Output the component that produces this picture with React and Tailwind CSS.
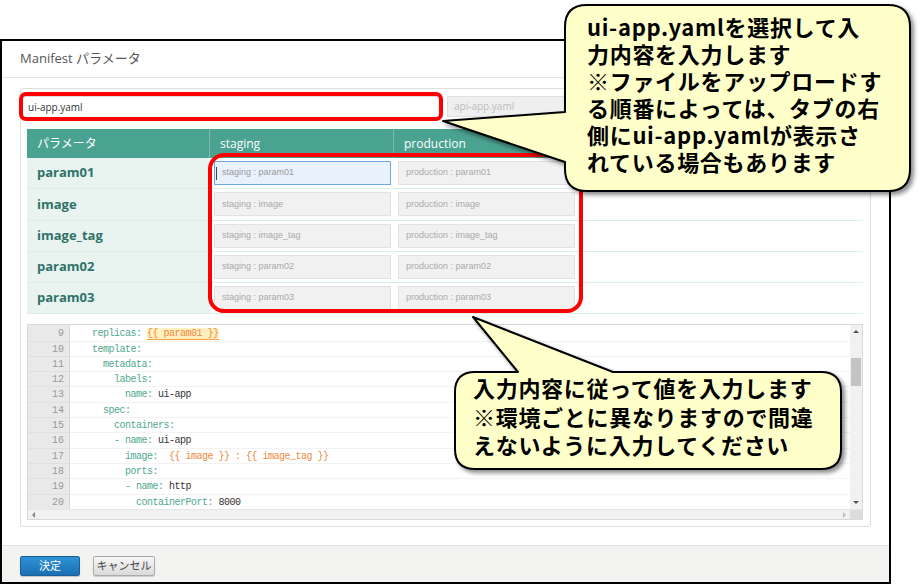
const rows = ['param01', 'image', 'image_tag', 'param02', 'param03'];

const code = [
  [9, [['    '], ['replicas:', 'k'], [' '], ['{{ param01 }}', 'hl']]],
  [10, [['    template:', 'k']]],
  [11, [['      metadata:', 'k']]],
  [12, [['        labels:', 'k']]],
  [13, [['          name:', 'k'], [' ui-app', 'v']]],
  [14, [['      spec:', 'k']]],
  [15, [['        containers:', 'k']]],
  [16, [['        - name:', 'k'], [' ui-app', 'v']]],
  [17, [['          image:', 'k'], ['  '], ['{{ image }}', 't'], [' : ', 't'], ['{{ image_tag }}', 't']]],
  [18, [['          ports:', 'k']]],
  [19, [['          - name:', 'k'], [' http', 'v']]],
  [20, [['            containerPort:', 'k'], [' 8000', 'v']]],
];

function Token({ text, kind }) {
  if (kind === 'k') return <span className="text-[#4fa88f]">{text}</span>;
  if (kind === 'v') return <span className="text-[#333]">{text}</span>;
  if (kind === 't') return <span className="text-[#f08a3c]">{text}</span>;
  if (kind === 'hl')
    return (
      <span className="text-[#f08a3c] bg-[#fff0c0] border-b border-[#f5a04a]">{text}</span>
    );
  return <span>{text}</span>;
}

function ParamInput({ text, focused }) {
  return (
    <div
      className={
        focused
          ? 'relative w-[177px] h-[24px] border border-[#6ea6e0] bg-[#e8f2fd] flex items-center pl-[7px] text-[9px] text-[#999] font-["Liberation_Sans",sans-serif]'
          : 'w-[177px] h-[24px] border border-[#e2e2e2] bg-[#f1f1f1] flex items-center pl-[7px] text-[9px] text-[#aaa] font-["Liberation_Sans",sans-serif]'
      }
    >
      {focused && <span className="absolute left-[1px] top-[5px] w-px h-[13px] bg-[#444]" />}
      {text}
    </div>
  );
}

function CodeEditor() {
  return (
    <div className="h-[196px] border border-[#d8d8d8] flex flex-col">
      <div className="flex h-[184px] overflow-hidden">
        <div className="w-[42px] bg-[#e9e9e9] border-r border-[#d6d6d6] pt-[1px]">
          {code.map(([n]) => (
            <div
              key={n}
              className="h-[15.3px] leading-[15.3px] text-right pr-[5px] text-[10px] text-[#999] border-b border-[#e0e0e0] font-['Liberation_Mono',monospace]"
            >
              {n}
            </div>
          ))}
        </div>
        <div className="flex-1 pt-[1px] font-['Liberation_Mono',monospace] text-[10px] tracking-[-0.5px]">
          {code.map(([n, parts]) => (
            <div
              key={n}
              className="h-[15.3px] leading-[15.3px] whitespace-pre border-b border-[#f2f2f2]"
            >
              {parts.map(([t, k], i) => (
                <Token key={i} text={t} kind={k} />
              ))}
            </div>
          ))}
        </div>
        <div className="w-[12px] bg-[#f1f1f1] flex flex-col items-center">
          <div className="mt-[5px] w-0 h-0 border-x-[3px] border-x-transparent border-b-[3px] border-b-[#555]" />
          <div className="mt-[25px] w-[10px] h-[28px] bg-[#c4c4c4]" />
          <div className="mt-auto mb-[5px] w-0 h-0 border-x-[3px] border-x-transparent border-t-[3px] border-t-[#555]" />
        </div>
      </div>
      <div className="flex h-[10px] bg-[#f1f1f1] border-t border-[#e6e6e6]">
        <div className="flex-1 flex items-center px-[4px]">
          <div className="w-0 h-0 border-y-[3px] border-y-transparent border-r-[3px] border-r-[#888]" />
          <div className="ml-auto w-0 h-0 border-y-[3px] border-y-transparent border-l-[3px] border-l-[#bbb]" />
        </div>
        <div className="w-[12px] bg-[#dcdcdc]" />
      </div>
    </div>
  );
}

export default function App() {
  return (
    <div className="relative w-[922px] h-[586px] overflow-hidden bg-white font-['Open_Sans','Noto_Sans_CJK_JP',sans-serif]">
      {/* modal */}
      <div className="mt-[39px] w-[891px] h-[545px] border-2 border-black flex flex-col">
        <div className="h-[37px] flex items-center px-[18px] border-b border-[#e5e5e5] text-[13px] text-[#555]">
          Manifest パラメータ
        </div>

        <div className="px-[18px] pt-[10px] pb-[18px]">
          <div className="h-[439px] border border-[#dedede] rounded-[3px]">
            <div className="flex pt-[7px] pl-[1px] text-[10px]">
              <div className="w-[418px] h-[22px] bg-white border border-[#ddd] flex items-center pl-[5px] text-[#333]">
                ui-app.yaml
              </div>
              <div className="ml-[7px] w-[180px] h-[21px] bg-[#efefef] border border-[#e0e0e0] flex items-center pl-[6px] text-[#bbb]">
                api-app.yaml
              </div>
            </div>

            <div className="pl-[6px] pr-[7px] mt-[11px]">
              <div className="grid grid-cols-[183px_184px_184px_1fr] h-[29px] bg-[#4aa291] text-white text-[12px]">
                <div className="flex items-center pl-[10px] border-r border-[#7dbcb0]">パラメータ</div>
                <div className="flex items-center pl-[10px] border-r border-[#7dbcb0]">staging</div>
                <div className="flex items-center pl-[10px]">production</div>
                <div />
              </div>
              {rows.map((r, i) => (
                <div
                  key={r}
                  className="grid grid-cols-[183px_184px_184px_1fr] h-[31.25px] border-b border-[#dcefea]"
                >
                  <div className="flex items-center pl-[10px] bg-[#e9f4f1] text-[13px] font-bold text-[#2f7268]">
                    {r}
                  </div>
                  <div className="flex items-center pl-[4px]">
                    <ParamInput text={`staging : ${r}`} focused={i === 0} />
                  </div>
                  <div className="flex items-center pl-[4px]">
                    <ParamInput text={`production : ${r}`} />
                  </div>
                  <div />
                </div>
              ))}
              <div className="mt-[10px]">
                <CodeEditor />
              </div>
            </div>
          </div>
        </div>

        <div className="h-[37px] bg-[#f3f3f1] border-t border-[#e3e3e3] flex items-start pt-[10px] px-[18px] gap-[13px] text-[11px]">
          <button className="w-[60px] h-[20px] rounded-[2px] bg-gradient-to-b from-[#2d93d6] to-[#1a6fb2] border border-[#1b5f98] text-white shadow-[0_1px_1px_rgba(0,0,0,0.2)]">
            決定
          </button>
          <button className="w-[62px] h-[20px] rounded-[2px] bg-gradient-to-b from-[#f7f7f7] to-[#dadada] border border-[#aaa] text-[#444] shadow-[0_1px_1px_rgba(0,0,0,0.15)]">
            キャンセル
          </button>
        </div>
      </div>

      {/* red highlight frames */}
      <div className="absolute left-[19px] top-[92px] w-[424px] h-[29px] border-4 border-[#ff0000] rounded-[7px]" />
      <div className="absolute left-[208px] top-[153px] w-[375px] h-[160px] border-4 border-[#ff0000] rounded-[16px]" />

      {/* callout bubbles */}
      <svg className="absolute left-0 top-0 pointer-events-none" width="922" height="586" viewBox="0 0 922 586">
        <defs>
          <filter id="sh" x="-10%" y="-10%" width="130%" height="130%">
            <feDropShadow dx="3" dy="3" stdDeviation="2" floodColor="#000" floodOpacity="0.45" />
          </filter>
        </defs>
        <path
          d="M587 5 H888 Q910 5 910 27 V169 Q910 191 888 191 H587 Q565 191 565 169 V162 L443 121 L565 112 V27 Q565 5 587 5 Z"
          fill="#ffffca"
          stroke="#000"
          strokeWidth="2"
          strokeLinejoin="round"
          filter="url(#sh)"
        />
        <path
          d="M475 372 H518 L473 317 L613 372 H821 Q841 372 841 392 V449 Q841 469 821 469 H475 Q455 469 455 449 V392 Q455 372 475 372 Z"
          fill="#ffffca"
          stroke="#000"
          strokeWidth="2"
          strokeLinejoin="round"
          filter="url(#sh)"
        />
      </svg>

      <div className="absolute left-[587px] top-[13px] text-[22px] leading-[27px] font-bold tracking-[0.7px] text-black whitespace-nowrap font-['Noto_Sans_CJK_JP',sans-serif]">
        <div>ui-app.yamlを選択して入</div>
        <div>力内容を入力します</div>
        <div>※ファイルをアップロードす</div>
        <div>る順番によっては、タブの右</div>
        <div>側にui-app.yamlが表示さ</div>
        <div>れている場合もあります</div>
      </div>

      <div className="absolute left-[473px] top-[373px] text-[22px] leading-[28.5px] font-bold tracking-[0.7px] text-black whitespace-nowrap font-['Noto_Sans_CJK_JP',sans-serif]">
        <div>入力内容に従って値を入力します</div>
        <div>※環境ごとに異なりますので間違</div>
        <div>えないように入力してください</div>
      </div>
    </div>
  );
}
